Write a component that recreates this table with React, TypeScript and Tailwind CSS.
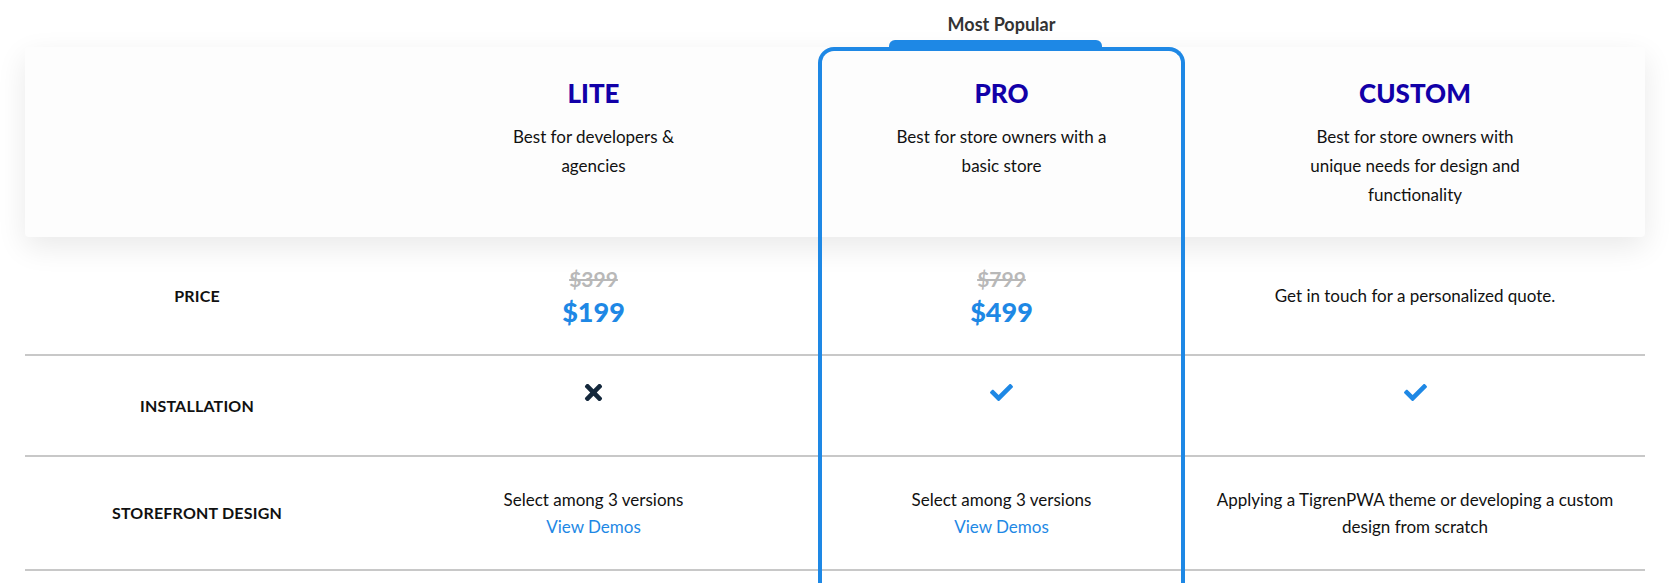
import React from "react";
import { FaCheck, FaTimes } from "react-icons/fa";

const font = { fontFamily: "Lato, 'Open Sans', sans-serif" };

function Label({ children }: { children: React.ReactNode }) {
  return (
    <div className="flex items-center justify-center text-[16px] font-bold text-[#111] tracking-[0.2px]">
      {children}
    </div>
  );
}

function Cell({ children }: { children: React.ReactNode }) {
  return (
    <div className="flex flex-col items-center justify-center text-center text-[17px] text-[#111]">
      {children}
    </div>
  );
}

function PlanHead({ title, lines }: { title: string; lines: string[] }) {
  return (
    <div className="flex flex-col items-center pt-[30px] text-center">
      <h2 className="text-[26px] leading-[32px] font-black text-[#1200a8]">{title}</h2>
      <p className="mt-[13px] text-[17px] leading-[29px] text-[#111]">
        {lines.map((l, i) => (
          <React.Fragment key={i}>
            {l}
            {i < lines.length - 1 && <br />}
          </React.Fragment>
        ))}
      </p>
    </div>
  );
}

function Price({ old, now }: { old: string; now: string }) {
  return (
    <Cell>
      <span className="mt-[2px] text-[21px] leading-[26px] font-bold text-[#b8b8b8] line-through">{old}</span>
      <span className="mt-[4px] text-[27px] leading-[32px] font-black text-[#1e88e5]">{now}</span>
    </Cell>
  );
}

export default function App() {
  const cols = "grid grid-cols-[344px_449px_367px_460px]";
  return (
    <div style={font} className="h-[583px] overflow-hidden bg-white">
      <div className="relative ml-[25px] w-[1620px] pt-[47px]">
        <div className={`${cols} h-[190px] rounded-[4px] bg-[#fdfdfd] shadow-[0_10px_30px_rgba(0,0,0,0.09)]`}>
          <div />
          <PlanHead title="LITE" lines={["Best for developers &", "agencies"]} />
          <PlanHead title="PRO" lines={["Best for store owners with a", "basic store"]} />
          <PlanHead
            title="CUSTOM"
            lines={["Best for store owners with", "unique needs for design and", "functionality"]}
          />
        </div>

        <div className={`${cols} h-[119px] border-b-2 border-[#c8c8c8]`}>
          <Label>PRICE</Label>
          <Price old="$399" now="$199" />
          <Price old="$799" now="$499" />
          <Cell>Get in touch for a personalized quote.</Cell>
        </div>

        <div className={`${cols} h-[101px] border-b-2 border-[#c8c8c8]`}>
          <Label>INSTALLATION</Label>
          <Cell>
            <FaTimes className="mb-[26px] text-[25px] text-[#14283c]" />
          </Cell>
          <Cell>
            <FaCheck className="mb-[26px] text-[23px] text-[#1e88e5]" />
          </Cell>
          <Cell>
            <FaCheck className="mb-[26px] text-[23px] text-[#1e88e5]" />
          </Cell>
        </div>

        <div className={`${cols} h-[114px] border-b-2 border-[#c8c8c8]`}>
          <Label>STOREFRONT DESIGN</Label>
          <Cell>
            <span className="leading-[27px]">Select among 3 versions</span>
            <a className="leading-[27px] text-[#1e88e5]">View Demos</a>
          </Cell>
          <Cell>
            <span className="leading-[27px]">Select among 3 versions</span>
            <a className="leading-[27px] text-[#1e88e5]">View Demos</a>
          </Cell>
          <Cell>
            <span className="leading-[27px]">
              Applying a TigrenPWA theme or developing a custom
              <br />
              design from scratch
            </span>
          </Cell>
        </div>

        <div className="pointer-events-none absolute left-[793px] top-[47px] h-[600px] w-[367px] rounded-t-[16px] border-4 border-b-0 border-[#1e88e5]">
          <div className="absolute left-[67px] top-[-11px] h-[9px] w-[213px] rounded-t-[6px] bg-[#1e88e5]" />
          <div className="absolute left-1/2 top-[-39px] -translate-x-1/2 whitespace-nowrap text-[18px] leading-[24px] font-bold text-[#333]">
            Most Popular
          </div>
        </div>
      </div>
    </div>
  );
}
